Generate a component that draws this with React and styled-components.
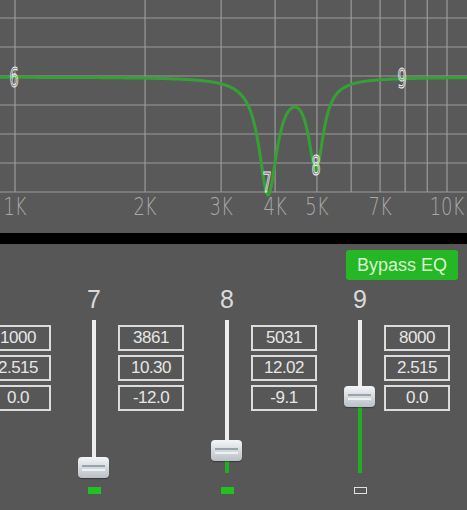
import React from 'react';
import styled, { createGlobalStyle } from 'styled-components';

const GlobalStyle = createGlobalStyle`
    html, body {
        margin: 0;
        padding: 0;
        background: #575757;
        overflow: hidden;
    }
    #root {
        width: 467px;
        height: 510px;
    }
`;

const W = 467;
const H = 233;
const AXIS_Y = 192;
const PX_PER_DECADE = 432;
const X_1K = 15;

const freqX = (f) => X_1K + PX_PER_DECADE * Math.log10(f / 1000);

const BANDS = [
    { id: 6, freq: '1000', q: '2.515', gain: 0.0 },
    { id: 7, freq: '3861', q: '10.30', gain: -12.0 },
    { id: 8, freq: '5031', q: '12.02', gain: -9.1 },
    { id: 9, freq: '8000', q: '2.515', gain: 0.0 },
];

// notch shapes on the plot (centre x, depth px, width px)
const NOTCHES = [
    { c: 268, depth: 115, w: 11 },
    { c: 316, depth: 88, w: 9 },
];

const curveY = (x) =>
    77 + NOTCHES.reduce((acc, n) => acc + n.depth / (1 + ((x - n.c) / n.w) ** 2), 0);

const buildCurve = () => {
    const pts = [];
    for (let x = 0; x <= W; x += 0.5) {
        pts.push(`${x.toFixed(1)},${curveY(x).toFixed(1)}`);
    }
    return 'M' + pts.join(' L');
};

const Root = styled.div`
    width: 467px;
    height: 510px;
    display: flex;
    flex-direction: column;
    background: #575757;
    font-family: "Liberation Sans", Arial, sans-serif;
`;

const Graph = styled.svg`
    display: block;
    width: 467px;
    height: 233px;
    background: #595959;
`;

const Divider = styled.div`
    height: 11px;
    background: #000;
`;

const Panel = styled.div`
    flex: 1;
    display: flex;
    flex-direction: column;
    padding-top: 6px;
    overflow: hidden;
`;

const TopBar = styled.div`
    display: flex;
    justify-content: flex-end;
    padding-right: 9px;
`;

const BypassButton = styled.button`
    width: 112px;
    height: 30px;
    border: none;
    border-radius: 3px;
    background: #25b725;
    color: #d9f3cf;
    font-family: "Liberation Sans", Arial, sans-serif;
    font-size: 18px;
    padding: 0;
    cursor: pointer;
`;

const Channels = styled.div`
    display: flex;
    align-items: flex-start;
    margin-left: -15px;
    margin-top: 4px;
`;

const Params = styled.div`
    width: 66px;
    flex-shrink: 0;
    display: flex;
    flex-direction: column;
    gap: 4px;
    margin-top: 41px;
`;

const ParamBox = styled.div`
    height: 26px;
    box-sizing: border-box;
    border: 2px solid #dcdcdc;
    display: flex;
    align-items: center;
    justify-content: center;
    color: #e6e6e6;
    font-size: 17px;
    letter-spacing: -0.5px;
`;

const Strip = styled.div`
    width: 67px;
    flex-shrink: 0;
    box-sizing: border-box;
    padding-left: 27px;
    display: flex;
    flex-direction: column;
`;

const StripInner = styled.div`
    width: 32px;
    display: flex;
    flex-direction: column;
    align-items: center;
`;

const ChannelLabel = styled.div`
    height: 30px;
    line-height: 30px;
    font-size: 25px;
    color: #dadada;
`;

const Track = styled.div`
    position: relative;
    margin-top: 6px;
    width: 32px;
    height: 153px;
    display: flex;
    flex-direction: column;
    align-items: center;
`;

const TrackUpper = styled.div`
    width: 4px;
    background: #eeeeee;
`;

const TrackLower = styled.div`
    width: 4px;
    flex: 1;
    background: #22ae22;
`;

const Thumb = styled.div`
    position: absolute;
    left: 0;
    width: 31px;
    height: 21px;
    box-sizing: border-box;
    border-radius: 4px;
    background: linear-gradient(#f4f6f8 0%, #d8dde2 45%, #b9c0c6 100%);
    box-shadow: 0 1px 1px rgba(0, 0, 0, 0.35);

    &::before,
    &::after {
        content: '';
        position: absolute;
        left: 4px;
        right: 4px;
        height: 2px;
        background: #9aa2aa;
    }
    &::before {
        top: 8px;
    }
    &::after {
        top: 12px;
        background: #eef1f3;
    }
`;

const Indicator = styled.div`
    margin-top: 14px;
    width: 13px;
    height: 7px;
    box-sizing: border-box;
    background: ${(p) => (p.$active ? '#22c022' : '#575757')};
    border: ${(p) => (p.$active ? 'none' : '1.5px solid #e0e0e0')};
`;

const TRACK_CENTER = 76.5;
const PX_PER_DB = 5.96;

function Slider({ gain }) {
    const center = Math.min(147.5, TRACK_CENTER - gain * PX_PER_DB);
    return (
        <Track>
            <TrackUpper style={{ height: center }} />
            <TrackLower />
            <Thumb style={{ top: center - 10.5 }} />
        </Track>
    );
}

function EqGraph() {
    const hLines = [18, 47, 76, 105, 134, 163, AXIS_Y];
    const vFreqs = [1000, 2000, 3000, 4000, 5000, 6000, 7000, 8000, 9000, 10000];
    const labels = [
        [1000, '1K'], [2000, '2K'], [3000, '3K'], [4000, '4K'],
        [5000, '5K'], [7000, '7K'], [10000, '10K'],
    ];
    const markers = [
        ['6', 14, 87],
        ['7', 267, 192],
        ['8', 316, 175],
        ['9', 402, 88],
    ];
    return (
        <Graph viewBox={`0 0 ${W} ${H}`}>
            {hLines.map((y) => (
                <line key={y} x1="0" x2={W} y1={y} y2={y} stroke="#9b9b9b" strokeWidth="1.2" />
            ))}
            {vFreqs.map((f) => (
                <line key={f} x1={freqX(f)} x2={freqX(f)} y1="0" y2={AXIS_Y} stroke="#9b9b9b" strokeWidth="1.2" />
            ))}
            {labels.map(([f, t]) => (
                <text
                    key={t}
                    transform={`translate(${freqX(f)}, 215) scale(0.72, 1)`}
                    textAnchor="middle"
                    fontFamily="'DejaVu Sans', sans-serif"
                    fontWeight="200"
                    fontSize="25"
                    fill="#a9a9a9"
                >
                    {t}
                </text>
            ))}
            <path d={buildCurve()} fill="none" stroke="#35a135" strokeWidth="3" />
            {markers.map(([t, x, y]) => (
                <text
                    key={t}
                    transform={`translate(${x}, ${y}) scale(0.55, 1)`}
                    textAnchor="middle"
                    fontFamily="'DejaVu Sans', sans-serif"
                    fontSize="26"
                    fill="none"
                    stroke="#f2f2f2"
                    strokeWidth="1.1"
                >
                    {t}
                </text>
            ))}
        </Graph>
    );
}

function ParamColumn({ band }) {
    return (
        <Params>
            <ParamBox>{band.freq}</ParamBox>
            <ParamBox>{band.q}</ParamBox>
            <ParamBox>{band.gain.toFixed(1)}</ParamBox>
        </Params>
    );
}

export default function App() {
    const [first, ...rest] = BANDS;
    return (
        <Root>
            <GlobalStyle />
            <EqGraph />
            <Divider />
            <Panel>
                <TopBar>
                    <BypassButton>Bypass EQ</BypassButton>
                </TopBar>
                <Channels>
                    <ParamColumn band={first} />
                    {rest.map((band) => (
                        <React.Fragment key={band.id}>
                            <Strip>
                                <StripInner>
                                    <ChannelLabel>{band.id}</ChannelLabel>
                                    <Slider gain={band.gain} />
                                    <Indicator $active={band.gain !== 0} />
                                </StripInner>
                            </Strip>
                            <ParamColumn band={band} />
                        </React.Fragment>
                    ))}
                </Channels>
            </Panel>
        </Root>
    );
}
